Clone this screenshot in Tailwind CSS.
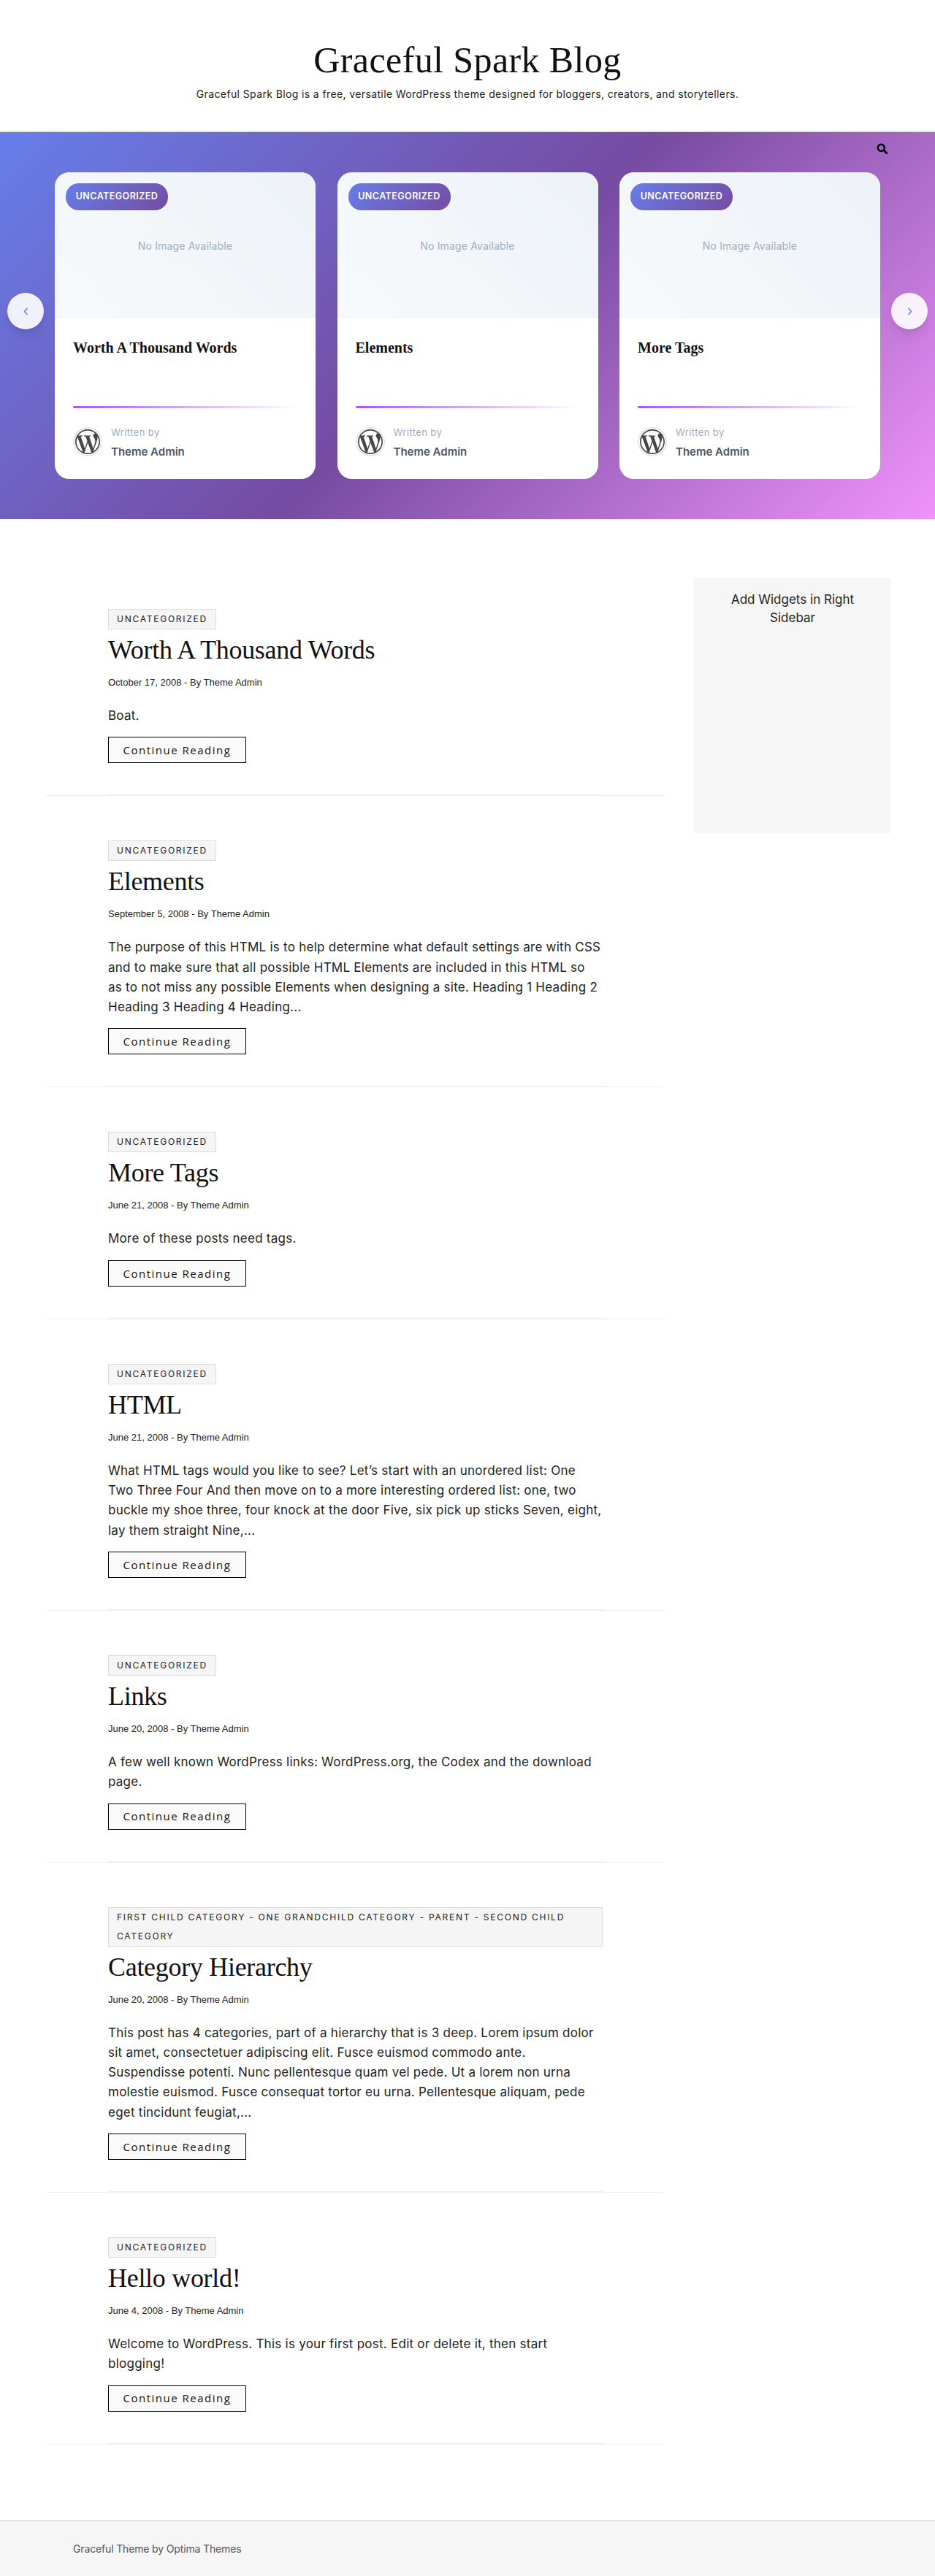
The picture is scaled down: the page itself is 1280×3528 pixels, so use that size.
<!doctype html>
<html lang="en"><head><meta charset="utf-8"><title>Graceful Spark Blog</title>
<script src="https://cdn.jsdelivr.net/npm/@tailwindcss/browser@4"></script></head>
<body class="bg-white font-['Inter',sans-serif] text-[#111]">
<div class="w-[1280px] h-[3528px] overflow-hidden flex flex-col">
<header class="h-[181px] shrink-0 border-b-2 border-[#e5e5e5] flex flex-col items-center pt-[52px]">
  <h1 class="font-['Liberation_Serif',serif] text-[50px] leading-[60px] tracking-[0.4px] text-[#111]">Graceful Spark Blog</h1>
  <p class="mt-[5px] text-[14px] leading-[24px] tracking-[0.38px] text-[#222]">Graceful Spark Blog is a free, versatile WordPress theme designed for bloggers, creators, and storytellers.</p>
</header>
<section class="relative h-[530px] shrink-0 bg-[linear-gradient(135deg,#667eea_0%,#764ba2_50%,#f093fb_100%)] pl-[75px] pt-[55px]">
  <svg class="absolute left-[1200px] top-[15px] w-[15px] h-[15px]" viewBox="0 0 15 15" fill="none" stroke="#000"><circle cx="6.3" cy="6.3" r="4.6" stroke-width="2.4"/><path d="M9.8 9.8L13.8 13.8" stroke-width="2.8" stroke-linecap="round"/></svg>
  <div class="flex gap-[29.5px]">
    <article class="w-[357px] h-[420px] rounded-[20px] bg-white overflow-hidden flex flex-col">
      <div class="relative h-[200px] shrink-0 flex items-center justify-center bg-[linear-gradient(45deg,#f7fafc,#edf2f7)]">
        <span class="absolute left-[15px] top-[15px] h-[37px] w-[140px] rounded-[18px] flex items-center justify-center bg-[linear-gradient(135deg,#667eea,#764ba2)] text-white text-[12.5px] font-semibold tracking-[0.45px]">UNCATEGORIZED</span>
        <span class="text-[14px] tracking-[0.15px] text-[#a0aec0]">No Image Available</span>
      </div>
      <div class="px-[25px] pt-[26px]">
        <h3 class="h-[94px] font-['Liberation_Serif',serif] text-[20px] leading-[28px] font-bold text-[#111]">Worth A Thousand Words</h3>
        <div class="h-[3px] rounded-full bg-[linear-gradient(90deg,#a855f7,transparent)]"></div>
        <div class="mt-[26px] flex gap-[12px]">
          <span class="w-[40px] h-[40px] shrink-0 rounded-full border-2 border-[#e2e8f0] bg-white flex items-center justify-center"><svg class="w-[34px] h-[34px]" viewBox="0 0 24 24" fill="#464646"><path d="M21.469 6.825c.84 1.537 1.318 3.3 1.318 5.175 0 3.979-2.156 7.456-5.363 9.325l3.295-9.527c.615-1.54.82-2.771.82-3.864 0-.405-.026-.78-.07-1.11m-7.981.105c.647-.03 1.232-.105 1.232-.105.582-.075.514-.93-.067-.899 0 0-1.755.135-2.88.135-1.064 0-2.85-.15-2.85-.15-.585-.03-.661.855-.075.885 0 0 .54.061 1.125.09l1.68 4.605-2.37 7.08L5.354 6.9c.649-.03 1.234-.1 1.234-.1.585-.075.516-.93-.065-.896 0 0-1.746.138-2.874.138-.2 0-.438-.008-.69-.015C4.911 3.15 8.235 1.215 12 1.215c2.809 0 5.365 1.072 7.286 2.833-.046-.003-.091-.009-.141-.009-1.06 0-1.812.923-1.812 1.914 0 .89.513 1.643 1.06 2.531.411.72.89 1.643.89 2.977 0 .915-.354 1.994-.821 3.479l-1.075 3.585-3.9-11.61.001.014zM12 22.784c-1.059 0-2.081-.153-3.048-.437l3.237-9.406 3.315 9.087c.024.053.05.101.078.149-1.12.393-2.325.609-3.582.609M1.211 12c0-1.564.336-3.05.935-4.39L7.29 21.709C3.694 19.96 1.212 16.271 1.211 12M12 0C5.385 0 0 5.385 0 12s5.385 12 12 12 12-5.385 12-12S18.615 0 12 0"/></svg></span>
          <div class="flex flex-col"><span class="text-[13px] leading-[14px] tracking-[0.4px] text-[#a0aec0]">Written by</span><span class="mt-[11px] text-[15px] leading-[18px] font-semibold text-[#4a5568]">Theme Admin</span></div>
        </div>
      </div>
    </article>
    <article class="w-[357px] h-[420px] rounded-[20px] bg-white overflow-hidden flex flex-col">
      <div class="relative h-[200px] shrink-0 flex items-center justify-center bg-[linear-gradient(45deg,#f7fafc,#edf2f7)]">
        <span class="absolute left-[15px] top-[15px] h-[37px] w-[140px] rounded-[18px] flex items-center justify-center bg-[linear-gradient(135deg,#667eea,#764ba2)] text-white text-[12.5px] font-semibold tracking-[0.45px]">UNCATEGORIZED</span>
        <span class="text-[14px] tracking-[0.15px] text-[#a0aec0]">No Image Available</span>
      </div>
      <div class="px-[25px] pt-[26px]">
        <h3 class="h-[94px] font-['Liberation_Serif',serif] text-[20px] leading-[28px] font-bold text-[#111]">Elements</h3>
        <div class="h-[3px] rounded-full bg-[linear-gradient(90deg,#a855f7,transparent)]"></div>
        <div class="mt-[26px] flex gap-[12px]">
          <span class="w-[40px] h-[40px] shrink-0 rounded-full border-2 border-[#e2e8f0] bg-white flex items-center justify-center"><svg class="w-[34px] h-[34px]" viewBox="0 0 24 24" fill="#464646"><path d="M21.469 6.825c.84 1.537 1.318 3.3 1.318 5.175 0 3.979-2.156 7.456-5.363 9.325l3.295-9.527c.615-1.54.82-2.771.82-3.864 0-.405-.026-.78-.07-1.11m-7.981.105c.647-.03 1.232-.105 1.232-.105.582-.075.514-.93-.067-.899 0 0-1.755.135-2.88.135-1.064 0-2.85-.15-2.85-.15-.585-.03-.661.855-.075.885 0 0 .54.061 1.125.09l1.68 4.605-2.37 7.08L5.354 6.9c.649-.03 1.234-.1 1.234-.1.585-.075.516-.93-.065-.896 0 0-1.746.138-2.874.138-.2 0-.438-.008-.69-.015C4.911 3.15 8.235 1.215 12 1.215c2.809 0 5.365 1.072 7.286 2.833-.046-.003-.091-.009-.141-.009-1.06 0-1.812.923-1.812 1.914 0 .89.513 1.643 1.06 2.531.411.72.89 1.643.89 2.977 0 .915-.354 1.994-.821 3.479l-1.075 3.585-3.9-11.61.001.014zM12 22.784c-1.059 0-2.081-.153-3.048-.437l3.237-9.406 3.315 9.087c.024.053.05.101.078.149-1.12.393-2.325.609-3.582.609M1.211 12c0-1.564.336-3.05.935-4.39L7.29 21.709C3.694 19.96 1.212 16.271 1.211 12M12 0C5.385 0 0 5.385 0 12s5.385 12 12 12 12-5.385 12-12S18.615 0 12 0"/></svg></span>
          <div class="flex flex-col"><span class="text-[13px] leading-[14px] tracking-[0.4px] text-[#a0aec0]">Written by</span><span class="mt-[11px] text-[15px] leading-[18px] font-semibold text-[#4a5568]">Theme Admin</span></div>
        </div>
      </div>
    </article>
    <article class="w-[357px] h-[420px] rounded-[20px] bg-white overflow-hidden flex flex-col">
      <div class="relative h-[200px] shrink-0 flex items-center justify-center bg-[linear-gradient(45deg,#f7fafc,#edf2f7)]">
        <span class="absolute left-[15px] top-[15px] h-[37px] w-[140px] rounded-[18px] flex items-center justify-center bg-[linear-gradient(135deg,#667eea,#764ba2)] text-white text-[12.5px] font-semibold tracking-[0.45px]">UNCATEGORIZED</span>
        <span class="text-[14px] tracking-[0.15px] text-[#a0aec0]">No Image Available</span>
      </div>
      <div class="px-[25px] pt-[26px]">
        <h3 class="h-[94px] font-['Liberation_Serif',serif] text-[20px] leading-[28px] font-bold text-[#111]">More Tags</h3>
        <div class="h-[3px] rounded-full bg-[linear-gradient(90deg,#a855f7,transparent)]"></div>
        <div class="mt-[26px] flex gap-[12px]">
          <span class="w-[40px] h-[40px] shrink-0 rounded-full border-2 border-[#e2e8f0] bg-white flex items-center justify-center"><svg class="w-[34px] h-[34px]" viewBox="0 0 24 24" fill="#464646"><path d="M21.469 6.825c.84 1.537 1.318 3.3 1.318 5.175 0 3.979-2.156 7.456-5.363 9.325l3.295-9.527c.615-1.54.82-2.771.82-3.864 0-.405-.026-.78-.07-1.11m-7.981.105c.647-.03 1.232-.105 1.232-.105.582-.075.514-.93-.067-.899 0 0-1.755.135-2.88.135-1.064 0-2.85-.15-2.85-.15-.585-.03-.661.855-.075.885 0 0 .54.061 1.125.09l1.68 4.605-2.37 7.08L5.354 6.9c.649-.03 1.234-.1 1.234-.1.585-.075.516-.93-.065-.896 0 0-1.746.138-2.874.138-.2 0-.438-.008-.69-.015C4.911 3.15 8.235 1.215 12 1.215c2.809 0 5.365 1.072 7.286 2.833-.046-.003-.091-.009-.141-.009-1.06 0-1.812.923-1.812 1.914 0 .89.513 1.643 1.06 2.531.411.72.89 1.643.89 2.977 0 .915-.354 1.994-.821 3.479l-1.075 3.585-3.9-11.61.001.014zM12 22.784c-1.059 0-2.081-.153-3.048-.437l3.237-9.406 3.315 9.087c.024.053.05.101.078.149-1.12.393-2.325.609-3.582.609M1.211 12c0-1.564.336-3.05.935-4.39L7.29 21.709C3.694 19.96 1.212 16.271 1.211 12M12 0C5.385 0 0 5.385 0 12s5.385 12 12 12 12-5.385 12-12S18.615 0 12 0"/></svg></span>
          <div class="flex flex-col"><span class="text-[13px] leading-[14px] tracking-[0.4px] text-[#a0aec0]">Written by</span><span class="mt-[11px] text-[15px] leading-[18px] font-semibold text-[#4a5568]">Theme Admin</span></div>
        </div>
      </div>
    </article>
  </div>
  <button class="absolute left-[10px] top-[220px] w-[50px] h-[50px] rounded-full bg-white/90 shadow-lg flex items-center justify-center"><svg class="w-[7px] h-[11px]" viewBox="0 0 7 11" fill="none" stroke="#667eea" stroke-width="1.5"><path d="M5.5 1L1.5 5.5L5.5 10"/></svg></button>
  <button class="absolute left-[1220px] top-[220px] w-[50px] h-[50px] rounded-full bg-white/90 shadow-lg flex items-center justify-center"><svg class="w-[7px] h-[11px]" viewBox="0 0 7 11" fill="none" stroke="#667eea" stroke-width="1.5"><path d="M1.5 1L5.5 5.5L1.5 10"/></svg></button>
</section>
<main class="flex-1 flex items-start pl-[63px] pt-[62px]">
  <div class="w-[847px] shrink-0">
    <article class="border-b border-[#eee] px-[85px]"><div class="border-b border-[#eee] pt-[61px] pb-[43px]">
      <span class="inline-block align-top border border-[#ddd] bg-[#f5f5f5] px-[11px] text-[12px] leading-[26px] tracking-[1.75px] text-[#222]">UNCATEGORIZED</span>
      <h2 class="mt-[4px] font-['Liberation_Serif',serif] text-[36px] leading-[48px] tracking-[-0.3px] text-[#111]">Worth A Thousand Words</h2>
      <p class="mt-[11px] font-['Liberation_Sans',sans-serif] text-[13px] leading-[20px] text-[#222]">October 17, 2008 - By Theme Admin</p>
      <p class="mt-[22px] text-[17px] leading-[27.3px] tracking-[0.25px] text-[#222]">Boat.</p>
      <a class="mt-[15px] flex items-center justify-center w-[189px] h-[36px] border border-black bg-[#fafafa] font-['Open_Sans',sans-serif] text-[15px] tracking-[1.5px] text-[#111]">Continue Reading</a>
    </div></article>
    <article class="border-b border-[#eee] px-[85px]"><div class="border-b border-[#eee] pt-[61px] pb-[43px]">
      <span class="inline-block align-top border border-[#ddd] bg-[#f5f5f5] px-[11px] text-[12px] leading-[26px] tracking-[1.75px] text-[#222]">UNCATEGORIZED</span>
      <h2 class="mt-[4px] font-['Liberation_Serif',serif] text-[36px] leading-[48px] tracking-[-0.3px] text-[#111]">Elements</h2>
      <p class="mt-[11px] font-['Liberation_Sans',sans-serif] text-[13px] leading-[20px] text-[#222]">September 5, 2008 - By Theme Admin</p>
      <p class="mt-[22px] text-[17px] leading-[27.3px] text-[#222] tracking-[0.25px] whitespace-nowrap">The purpose of this HTML is to help determine what default settings are with CSS<br>and to make sure that all possible HTML Elements are included in this HTML so<br>as to not miss any possible Elements when designing a site. Heading 1 Heading 2<br>Heading 3 Heading 4 Heading...</p>
      <a class="mt-[15px] flex items-center justify-center w-[189px] h-[36px] border border-black bg-[#fafafa] font-['Open_Sans',sans-serif] text-[15px] tracking-[1.5px] text-[#111]">Continue Reading</a>
    </div></article>
    <article class="border-b border-[#eee] px-[85px]"><div class="border-b border-[#eee] pt-[61px] pb-[43px]">
      <span class="inline-block align-top border border-[#ddd] bg-[#f5f5f5] px-[11px] text-[12px] leading-[26px] tracking-[1.75px] text-[#222]">UNCATEGORIZED</span>
      <h2 class="mt-[4px] font-['Liberation_Serif',serif] text-[36px] leading-[48px] tracking-[-0.3px] text-[#111]">More Tags</h2>
      <p class="mt-[11px] font-['Liberation_Sans',sans-serif] text-[13px] leading-[20px] text-[#222]">June 21, 2008 - By Theme Admin</p>
      <p class="mt-[22px] text-[17px] leading-[27.3px] text-[#222] tracking-[0.25px] whitespace-nowrap">More of these posts need tags.</p>
      <a class="mt-[15px] flex items-center justify-center w-[189px] h-[36px] border border-black bg-[#fafafa] font-['Open_Sans',sans-serif] text-[15px] tracking-[1.5px] text-[#111]">Continue Reading</a>
    </div></article>
    <article class="border-b border-[#eee] px-[85px]"><div class="border-b border-[#eee] pt-[61px] pb-[43px]">
      <span class="inline-block align-top border border-[#ddd] bg-[#f5f5f5] px-[11px] text-[12px] leading-[26px] tracking-[1.75px] text-[#222]">UNCATEGORIZED</span>
      <h2 class="mt-[4px] font-['Liberation_Serif',serif] text-[36px] leading-[48px] tracking-[-0.3px] text-[#111]">HTML</h2>
      <p class="mt-[11px] font-['Liberation_Sans',sans-serif] text-[13px] leading-[20px] text-[#222]">June 21, 2008 - By Theme Admin</p>
      <p class="mt-[22px] text-[17px] leading-[27.3px] text-[#222] tracking-[0.25px] whitespace-nowrap">What HTML tags would you like to see? Let’s start with an unordered list: One<br>Two Three Four And then move on to a more interesting ordered list: one, two<br>buckle my shoe three, four knock at the door Five, six pick up sticks Seven, eight,<br>lay them straight Nine,...</p>
      <a class="mt-[15px] flex items-center justify-center w-[189px] h-[36px] border border-black bg-[#fafafa] font-['Open_Sans',sans-serif] text-[15px] tracking-[1.5px] text-[#111]">Continue Reading</a>
    </div></article>
    <article class="border-b border-[#eee] px-[85px]"><div class="border-b border-[#eee] pt-[61px] pb-[43px]">
      <span class="inline-block align-top border border-[#ddd] bg-[#f5f5f5] px-[11px] text-[12px] leading-[26px] tracking-[1.75px] text-[#222]">UNCATEGORIZED</span>
      <h2 class="mt-[4px] font-['Liberation_Serif',serif] text-[36px] leading-[48px] tracking-[-0.3px] text-[#111]">Links</h2>
      <p class="mt-[11px] font-['Liberation_Sans',sans-serif] text-[13px] leading-[20px] text-[#222]">June 20, 2008 - By Theme Admin</p>
      <p class="mt-[22px] text-[17px] leading-[27.3px] text-[#222] tracking-[0.25px] whitespace-nowrap">A few well known WordPress links: WordPress.org, the Codex and the download<br>page.</p>
      <a class="mt-[15px] flex items-center justify-center w-[189px] h-[36px] border border-black bg-[#fafafa] font-['Open_Sans',sans-serif] text-[15px] tracking-[1.5px] text-[#111]">Continue Reading</a>
    </div></article>
    <article class="border-b border-[#eee] px-[85px]"><div class="border-b border-[#eee] pt-[61px] pb-[43px]">
      <span class="block border border-[#ddd] bg-[#f5f5f5] px-[11px] text-[12px] leading-[26px] tracking-[1.75px] text-[#222] whitespace-nowrap">FIRST CHILD CATEGORY - ONE GRANDCHILD CATEGORY - PARENT - SECOND CHILD<br>CATEGORY</span>
      <h2 class="mt-[4px] font-['Liberation_Serif',serif] text-[36px] leading-[48px] tracking-[-0.3px] text-[#111]">Category Hierarchy</h2>
      <p class="mt-[11px] font-['Liberation_Sans',sans-serif] text-[13px] leading-[20px] text-[#222]">June 20, 2008 - By Theme Admin</p>
      <p class="mt-[22px] text-[17px] leading-[27.3px] text-[#222] tracking-[0.25px] whitespace-nowrap">This post has 4 categories, part of a hierarchy that is 3 deep. Lorem ipsum dolor<br>sit amet, consectetuer adipiscing elit. Fusce euismod commodo ante.<br>Suspendisse potenti. Nunc pellentesque quam vel pede. Ut a lorem non urna<br>molestie euismod. Fusce consequat tortor eu urna. Pellentesque aliquam, pede<br>eget tincidunt feugiat,...</p>
      <a class="mt-[15px] flex items-center justify-center w-[189px] h-[36px] border border-black bg-[#fafafa] font-['Open_Sans',sans-serif] text-[15px] tracking-[1.5px] text-[#111]">Continue Reading</a>
    </div></article>
    <article class="border-b border-[#eee] px-[85px]"><div class="border-b border-[#eee] pt-[61px] pb-[43px]">
      <span class="inline-block align-top border border-[#ddd] bg-[#f5f5f5] px-[11px] text-[12px] leading-[26px] tracking-[1.75px] text-[#222]">UNCATEGORIZED</span>
      <h2 class="mt-[4px] font-['Liberation_Serif',serif] text-[36px] leading-[48px] tracking-[-0.3px] text-[#111]">Hello world!</h2>
      <p class="mt-[11px] font-['Liberation_Sans',sans-serif] text-[13px] leading-[20px] text-[#222]">June 4, 2008 - By Theme Admin</p>
      <p class="mt-[22px] text-[17px] leading-[27.3px] text-[#222] tracking-[0.25px] whitespace-nowrap">Welcome to WordPress. This is your first post. Edit or delete it, then start<br>blogging!</p>
      <a class="mt-[15px] flex items-center justify-center w-[189px] h-[36px] border border-black bg-[#fafafa] font-['Open_Sans',sans-serif] text-[15px] tracking-[1.5px] text-[#111]">Continue Reading</a>
    </div></article>
  </div>
  <aside class="ml-[40px] mt-[18px] w-[270px] h-[350px] shrink-0 bg-[#f6f6f6] px-[20px] pt-[18px] text-center text-[17px] leading-[25px] text-[#222]">Add Widgets in Right<br>Sidebar</aside>
</main>
<footer class="h-[76px] shrink-0 border-t border-[#ccc] bg-[#f6f6f6] pl-[100px] flex items-center text-[14px] tracking-[-0.15px] text-[#555]">Graceful Theme by Optima Themes</footer>
</div>
</body></html>
